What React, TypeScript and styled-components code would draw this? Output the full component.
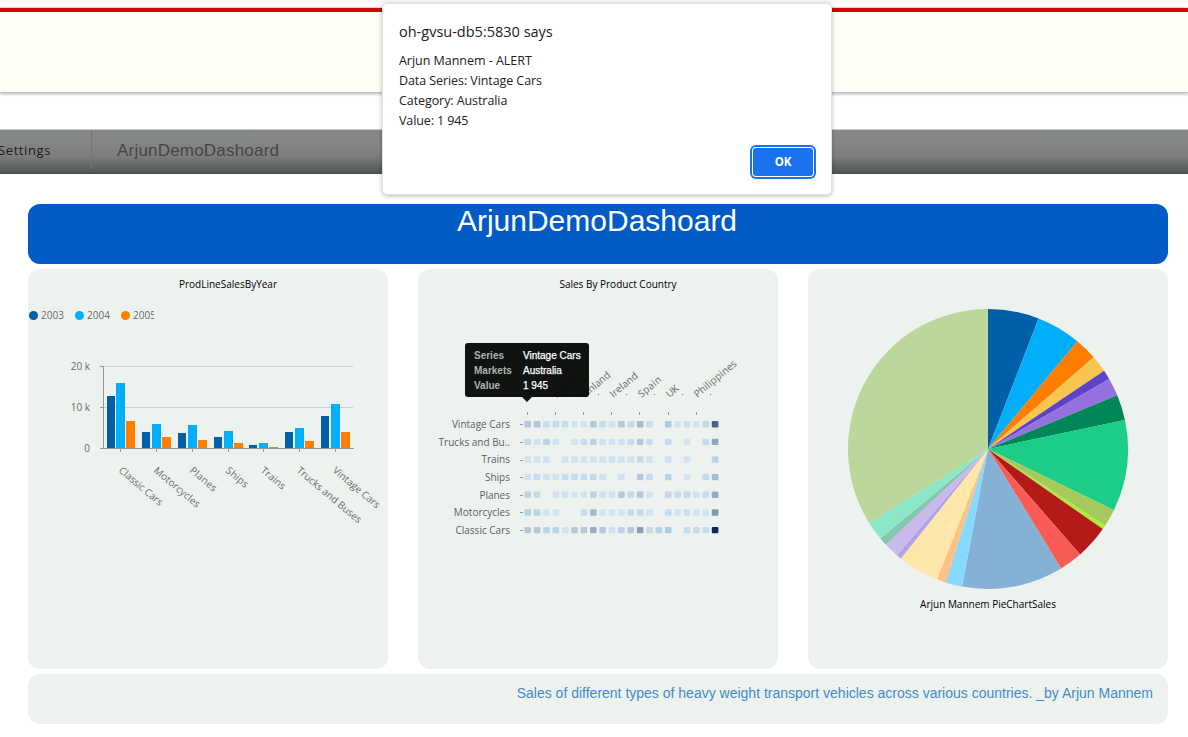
import React from "react";
import styled, { createGlobalStyle } from "styled-components";

const sans = `"Open Sans", "Noto Sans", sans-serif`;
const arial = `"Liberation Sans", Arial, sans-serif`;

const GlobalStyle = createGlobalStyle`
  * { box-sizing: border-box; }
  body { margin: 0; background: #fff; font-family: ${sans}; overflow: hidden; }
`;

const Page = styled.div`
  position: relative;
  width: 1188px;
  height: 737px;
  display: flex;
  flex-direction: column;
  overflow: hidden;
`;

const BrowserEdge = styled.div`
  height: 8px;
  flex: none;
  background: linear-gradient(#f7f7f7 0 3px, #fff 3px 7px, #e3e3e3 7px);
`;

const Header = styled.header`
  height: 85px;
  flex: none;
  background: #fffff5;
  border-top: 4px solid #d60000;
  border-bottom: 1px solid #c2c2c2;
  box-shadow: 0 1px 3px rgba(0, 0, 0, 0.3);
`;

const NavBar = styled.nav`
  margin-top: 36px;
  height: 45px;
  flex: none;
  display: flex;
  align-items: stretch;
  border-top: 1px solid #c9cbc9;
  border-bottom: 1px solid #4b4d4b;
  background: linear-gradient(#868a86 0, #838383 38%, #7b7d7c 62%, #505452 100%);
`;

const NavItem = styled.div`
  width: 92px;
  height: 39px;
  border-right: 1px solid #747674;
  line-height: 41px;
  font-size: 13px;
  letter-spacing: 0.6px;
  color: #1c1c1c;
  white-space: nowrap;
`;

const NavLabel = styled.span`
  margin-left: -2px;
`;

const NavTitle = styled.div`
  padding-left: 25px;
  line-height: 41px;
  font-family: ${arial};
  font-size: 17px;
  letter-spacing: 0.2px;
  color: #444644;
`;

const Main = styled.main`
  margin: 30px 20px 0 28px;
  display: flex;
  flex-direction: column;
  gap: 5px;
`;

const Banner = styled.h1`
  margin: 0;
  height: 60px;
  padding-right: 2px;
  border-radius: 12px;
  background: #005bc7;
  color: #fff;
  font: 400 30px/33px ${arial};
  text-align: center;
`;

const Cards = styled.section`
  display: grid;
  grid-template-columns: repeat(3, 360px);
  column-gap: 30px;
`;

const Card = styled.article`
  height: 400px;
  border-radius: 12px;
  background: #edf2ef;
  display: flex;
  flex-direction: column;
  overflow: hidden;
`;

const ChartTitle = styled.h2<{ $shift?: number }>`
  margin: 0;
  height: 31px;
  flex: none;
  padding-left: ${(p) => p.$shift ?? 0}px;
  font: 400 10px/31px ${sans};
  color: #000;
  text-align: center;
`;

const Chart = styled.svg`
  display: block;
  flex: none;
  font-family: ${sans};
  font-size: 10px;
  overflow: visible;
`;

const Legend = styled.div`
  width: 126px;
  height: 14px;
  flex: none;
  margin: 8px 0 18px;
  padding-left: 1px;
  display: flex;
  overflow: hidden;
  color: #6b6b6b;
  font-size: 10px;
  line-height: 14px;
`;

const LegendItem = styled.span<{ $color: string }>`
  display: flex;
  align-items: center;
  gap: 3px;
  width: 46px;
  flex: none;
  &::before {
    content: "";
    width: 9px;
    height: 9px;
    border-radius: 50%;
    background: ${(p) => p.$color};
  }
`;

const Footer = styled.footer`
  height: 50px;
  padding-right: 15px;
  border-radius: 12px;
  background: #edf2ef;
  color: #428bca;
  font: 400 14px/38px ${arial};
  text-align: right;
`;

const Dialog = styled.section`
  position: absolute;
  left: 382px;
  top: 3px;
  width: 450px;
  height: 192px;
  padding: 17px 17px 0;
  border: 1px solid #dfe4e2;
  border-radius: 5px;
  background: #fff;
  box-shadow: 0 1px 4px rgba(0, 0, 0, 0.28);
  color: #202124;
  display: flex;
  flex-direction: column;
`;

const DialogTitle = styled.h2`
  margin: 0 0 8px -1px;
  font: 400 14.5px/22px ${sans};
`;

const DialogLine = styled.p<{ $spacing: number }>`
  margin: 0 0 0 -1px;
  font-size: 12.5px;
  line-height: 20px;
  letter-spacing: ${(p) => p.$spacing}px;
`;

const OkButton = styled.button`
  align-self: flex-end;
  margin: 17px 1px 0 0;
  width: 60px;
  height: 28px;
  padding: 0;
  border: 0;
  border-radius: 3px;
  background: #1a73ed;
  box-shadow: 0 0 0 1px #fff, 0 0 0 3px #1a73ed;
  color: #fff;
  font: 700 11.5px/28px ${sans};
  letter-spacing: -0.2px;
`;

const Tip = styled.aside`
  position: absolute;
  left: 465px;
  top: 343px;
  width: 124px;
  height: 54px;
  padding: 5px 9px;
  border-radius: 3px;
  background: rgba(3, 7, 4, 0.95);
  display: grid;
  grid-template-columns: 49px 1fr;
  grid-auto-rows: 15px;
  font: 400 10px/16px ${arial};
  color: #fff;
  white-space: nowrap;
  &::after {
    content: "";
    position: absolute;
    left: 57px;
    top: 54px;
    border: 5px solid transparent;
    border-top-color: #0f1310;
    border-bottom: 0;
  }
`;

const TipKey = styled.span`
  font-weight: 700;
  color: #b0b2b0;
`;

const TipValue = styled.span`
  -webkit-text-stroke: 0.25px #fff;
`;

const years = [
  { label: "2003", color: "#005fa6" },
  { label: "2004", color: "#00aefa" },
  { label: "2005", color: "#ff7d00" },
];

const sales = [
  { name: "Classic Cars", x: 107, len: 54, v: [52, 65, 27] },
  { name: "Motorcycles", x: 142, len: 57, v: [16, 24, 11] },
  { name: "Planes", x: 178, len: 32, v: [15, 23, 8] },
  { name: "Ships", x: 214, len: 26, v: [11, 17, 5] },
  { name: "Trains", x: 249, len: 29, v: [3, 5, 1] },
  { name: "Trucks and Buses", x: 285, len: 81, v: [16, 20, 7] },
  { name: "Vintage Cars", x: 321, len: 58, v: [32, 44, 16] },
];

function BarChart() {
  return (
    <Chart width="360" height="200" viewBox="28 340 360 200">
      {[["20 k", 366], ["10 k", 407], ["0", 448]].map(([t, y]) => (
        <g key={t}>
          <rect x={100} y={y} width={t === "0" ? 254 : 253} height={1} fill={t === "0" ? "#959795" : "#cbcfcc"} />
          <rect x={100} y={y} width={4} height={1} fill="#959795" />
          <text x={90} y={Number(y) + 4} textAnchor="end" fill="#6b6b6b">{t}</text>
        </g>
      ))}
      <rect x={103} y={366} width={1} height={83} fill="#959795" />
      {sales.map((s) => (
        <g key={s.name}>
          {s.v.map((h, i) => (
            <rect key={i} x={s.x + [0, s.x === 107 ? 9 : 10, s.x === 107 ? 19 : 20][i]} y={448 - h} width={i === 0 ? 8 : 9} height={h} fill={years[i].color} />
          ))}
          <rect x={s.x === 107 ? 120 : s.x + 14} y={449} width={1} height={3} fill="#959795" />
          <text transform={`translate(${s.x + 11} 471.5) rotate(40)`} textLength={s.len} fill="#6b6b6b">{s.name}</text>
        </g>
      ))}
    </Chart>
  );
}

const shades: Record<string, string> = {
  a: "#cfe3f0", b: "#c5ddf1", c: "#c4dae6", d: "#bad3e5", e: "#b4cada", f: "#b3c8df",
  g: "#a5bbd0", h: "#95acc9", i: "#879eb9", j: "#8fa5c0", k: "#7f98b5", l: "#466489", m: "#06285c",
};

const heat: [string, string][] = [
  ["Vintage Cars", "efbbbaaebaecgb.eabacl"],
  ["Trucks and Bu..", "cada.abdaaabfb.b.a.cj"],
  ["Trains", "aaa.aaaaaaaaca.a.a..d"],
  ["Ships", "abaabbbca.a.eb.d.a.cg"],
  ["Planes", "dc.aaaadaaecea.cbcabh"],
  ["Motorcycles", "ddaa..bgaaacca.babaak"],
  ["Classic Cars", "eeddaeeheadeicde.bcbm"],
];

const markets: [string, number][] = [
  ["Australia", 40], ["Austria", 33], ["Finland", 34], ["Ireland", 33], ["Spain", 27], ["UK", 13], ["Philippines", 52],
];

function HeatMap() {
  return (
    <Chart width="360" height="240" viewBox="418 300 360 240">
      {markets.map(([m, len], i) => (
        <g key={m} fill="#6b6b6b">
          <text transform={`translate(${529 + i * 28.1} 398) rotate(-40)`} textLength={len}>{m}</text>
          <rect x={Math.round(541.7 + i * 28.1)} y={394} width={1} height={1} />
          <rect x={Math.round(527 + i * 28.1)} y={412} width={1} height={3} fill="#959795" />
        </g>
      ))}
      {heat.map(([name, cells], r) => {
        const y = 424.2 + r * 17.65;
        return (
          <g key={name}>
            <text x={510} y={y + 3.8} textAnchor="end" fill="#5f5f5f">{name}</text>
            <rect x={520} y={Math.round(y)} width={3} height={1} fill="#959795" />
            {[...cells].map((c, i) =>
              c === "." ? null : (
                <rect key={i} x={524.4 + i * 9.37} y={y - 3.2} width={6.6} height={6.4} rx={1} fill={shades[c]} />
              )
            )}
          </g>
        );
      })}
    </Chart>
  );
}

const slices: [string, number, number][] = [
  ["#005fa6", 611, 55], ["#00aefa", 726, 125], ["#ff7d00", 776, 172], ["#f8c64e", 806, 213],
  ["#5c43c8", 822, 237], ["#9471de", 846, 286], ["#008757", 869, 360], ["#1bcd86", 836, 630],
  ["#a5ca5b", 810, 676], ["#aaee3b", 803, 687], ["#b21b18", 735, 763], ["#f95c57", 678, 805],
  ["#85b1d7", 381, 860], ["#86d9ff", 332, 846], ["#ffc184", 306, 838], ["#ffe7a9", 199, 774],
  ["#afa3e8", 186, 765], ["#cbb9ee", 154, 733], ["#85c6ae", 137, 715], ["#8de8c7", 104, 668],
  ["#bcd79c", 459, 27],
];

function PieChart() {
  const on = (x: number, y: number) => {
    const a = Math.atan2(y - 447, x - 459);
    return `${(140 * Math.cos(a)).toFixed(2)} ${(140 * Math.sin(a)).toFixed(2)}`;
  };
  return (
    <Chart width="360" height="320" viewBox="-180 -180 360 320">
      {slices.map(([color, x, y], i) => {
        const [, px, py] = slices[(i + slices.length - 1) % slices.length];
        return <path key={color} d={`M0 0L${on(px, py)}A140 140 0 0 1 ${on(x, y)}Z`} fill={color} />;
      })}
    </Chart>
  );
}

export default function App() {
  return (
    <>
      <GlobalStyle />
      <Page>
        <BrowserEdge />
        <Header />
        <NavBar>
          <NavItem><NavLabel>Settings</NavLabel></NavItem>
          <NavTitle>ArjunDemoDashoard</NavTitle>
        </NavBar>
        <Main>
          <Banner>ArjunDemoDashoard</Banner>
          <Cards>
            <Card>
              <ChartTitle $shift={40}>ProdLineSalesByYear</ChartTitle>
              <Legend>
                {years.map((y) => <LegendItem key={y.label} $color={y.color}>{y.label}</LegendItem>)}
              </Legend>
              <BarChart />
            </Card>
            <Card>
              <ChartTitle $shift={40}>Sales By Product Country</ChartTitle>
              <HeatMap />
            </Card>
            <Card>
              <PieChart />
              <ChartTitle>Arjun Mannem PieChartSales</ChartTitle>
            </Card>
          </Cards>
          <Footer>Sales of different types of heavy weight transport vehicles across various countries. _by Arjun Mannem</Footer>
        </Main>
        <Tip>
          <TipKey>Series</TipKey><TipValue>Vintage Cars</TipValue>
          <TipKey>Markets</TipKey><TipValue>Australia</TipValue>
          <TipKey>Value</TipKey><TipValue>1 945</TipValue>
        </Tip>
        <Dialog>
          <DialogTitle>oh-gvsu-db5:5830 says</DialogTitle>
          <DialogLine $spacing={-0.03}>Arjun Mannem - ALERT</DialogLine>
          <DialogLine $spacing={-0.08}>Data Series: Vintage Cars</DialogLine>
          <DialogLine $spacing={-0.08}>Category: Australia</DialogLine>
          <DialogLine $spacing={-0.1}>Value: 1 945</DialogLine>
          <OkButton>OK</OkButton>
        </Dialog>
      </Page>
    </>
  );
}
